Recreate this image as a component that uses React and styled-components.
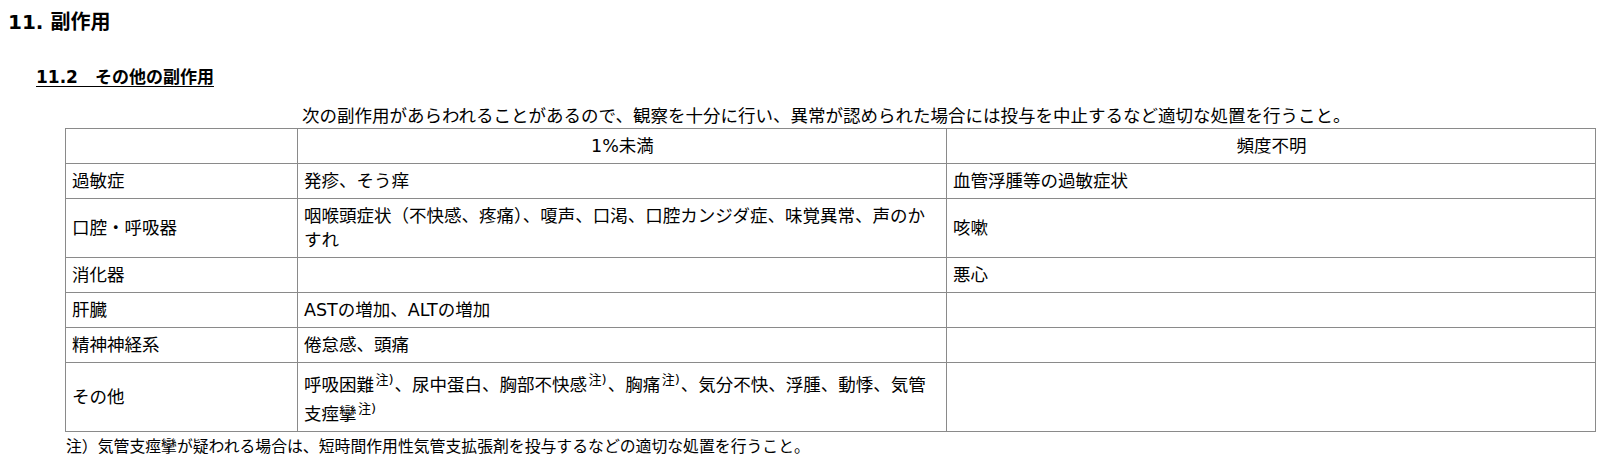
import React from 'react'
import styled, { createGlobalStyle } from 'styled-components'

const GlobalStyle = createGlobalStyle`
  body {
    margin: 8px;
    background: #fff;
    color: #000;
    font-family: "DejaVu Sans", "Noto Sans CJK JP", sans-serif;
  }
`

const Title = styled.div`
  font-size: 20px;
  font-weight: bold;
  line-height: 28px;
`

const SubTitle = styled.div`
  margin: 29px 0 0 28px;
  font-size: 17px;
  font-weight: bold;
  line-height: 24px;
  text-decoration: underline;
  text-underline-offset: 3px;
`

const Section = styled.div`
  width: 1530px;
  margin-left: 57px;
`

const Intro = styled.p`
  margin: 15px 0 0;
  padding-left: 237px;
  font-size: 17.5px;
  line-height: 24px;
  white-space: nowrap;
`

const Table = styled.table`
  width: 1530px;
  border-collapse: collapse;
  table-layout: fixed;
  font-size: 17.5px;
  line-height: 24px;
`

const Cell = styled.td`
  border: 1px solid #8a8a8a;
  padding: 5px 5px 5px 6px;
  vertical-align: middle;
  text-align: ${({ center }) => (center ? 'center' : 'left')};
`

const Note = styled.sup`
  margin: 0 1px 0 1.5px;
  font-size: 13px;
  line-height: 24px;
  vertical-align: 7px;
`

const Footnote = styled.p`
  margin: 3px 0 0 1px;
  font-size: 15.85px;
  line-height: 24px;
`

const rows = [
  { name: '過敏症', rare: '発疹、そう痒', unknown: '血管浮腫等の過敏症状' },
  { name: '口腔・呼吸器', rare: '咽喉頭症状（不快感、疼痛）、嗄声、口渇、口腔カンジダ症、味覚異常、声のかすれ', unknown: '咳嗽' },
  { name: '消化器', rare: '', unknown: '悪心' },
  { name: '肝臓', rare: 'ASTの増加、ALTの増加', unknown: '' },
  { name: '精神神経系', rare: '倦怠感、頭痛', unknown: '' },
  {
    name: 'その他',
    rare: (
      <>
        呼吸困難<Note>注)</Note>、尿中蛋白、胸部不快感<Note>注)</Note>、胸痛<Note>注)</Note>、気分不快、浮腫、動悸、気管支痙攣<Note>注)</Note>
      </>
    ),
    unknown: '',
  },
]

export default function App() {
  return (
    <>
      <GlobalStyle />
      <Title>11. 副作用</Title>
      <SubTitle>11.2　その他の副作用</SubTitle>
      <Section>
        <Intro>次の副作用があらわれることがあるので、観察を十分に行い、異常が認められた場合には投与を中止するなど適切な処置を行うこと。</Intro>
        <Table>
          <colgroup>
            <col style={{ width: 232 }} />
            <col style={{ width: 649 }} />
            <col style={{ width: 649 }} />
          </colgroup>
          <thead>
            <tr>
              <Cell />
              <Cell center>1%未満</Cell>
              <Cell center>頻度不明</Cell>
            </tr>
          </thead>
          <tbody>
            {rows.map((row, index) => (
              <tr key={index}>
                <Cell>{row.name}</Cell>
                <Cell>{row.rare}</Cell>
                <Cell>{row.unknown}</Cell>
              </tr>
            ))}
          </tbody>
        </Table>
        <Footnote>注）気管支痙攣が疑われる場合は、短時間作用性気管支拡張剤を投与するなどの適切な処置を行うこと。</Footnote>
      </Section>
    </>
  )
}
